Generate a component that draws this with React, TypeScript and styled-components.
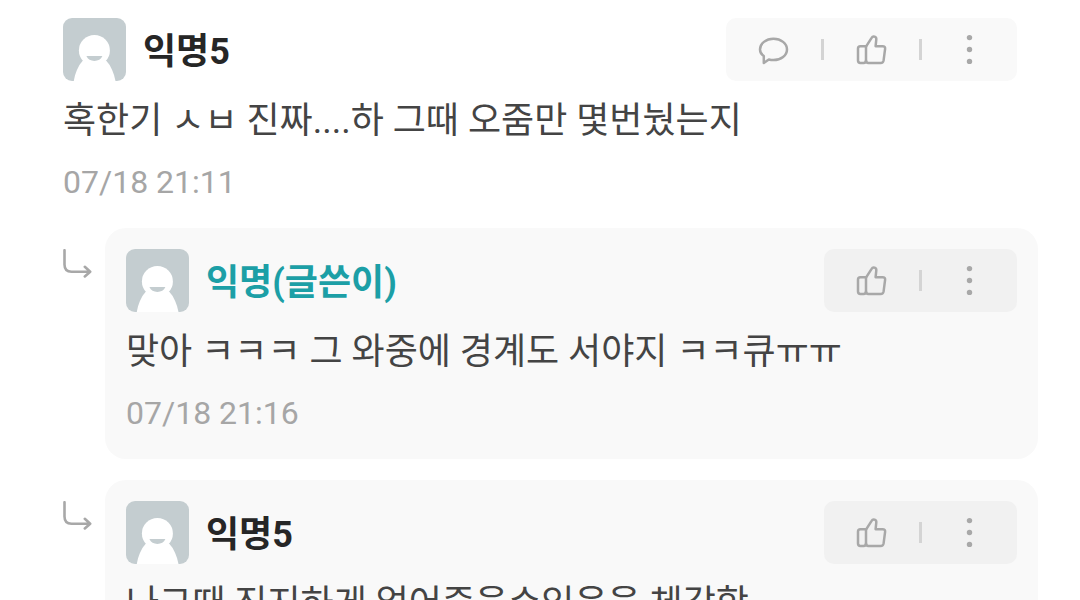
import React from "react";
import styled, { createGlobalStyle } from "styled-components";

const GlobalStyle = createGlobalStyle`
  *, *::before, *::after { box-sizing: border-box; }
  body {
    margin: 0;
    background: #ffffff;
    font-family: Roboto, "Noto Sans CJK KR", sans-serif;
  }
`;

const Thread = styled.main`
  padding: 18px 42px 21px 63px;
`;

const ReplyList = styled.ul`
  display: flex;
  flex-direction: column;
  gap: 21px;
  margin: 0;
  padding: 0;
  list-style: none;
`;

const ReplyRow = styled.li`
  display: grid;
  grid-template-columns: 42px minmax(0, 1fr);
`;

const ReplyMark = styled.svg`
  width: 30px;
  height: 30px;
  margin-top: 21px;
  fill: none;
  stroke: #a8a8a8;
  stroke-width: 2.6;
  stroke-linecap: round;
  stroke-linejoin: round;
`;

const Comment = styled.article<{ $card?: boolean }>`
  padding: ${({ $card }) => ($card ? "21px 21px 25px" : "0 21px 25px 0")};
  border-radius: ${({ $card }) => ($card ? "21px" : "0")};
  background: ${({ $card }) => ($card ? "#f9f9f9" : "transparent")};
`;

const Header = styled.header`
  display: flex;
  align-items: center;
  height: 63px;
`;

const AvatarImage = styled.svg`
  flex: none;
  width: 63px;
  height: 63px;
  border-radius: 9px;
  background: #c4cdd0;
`;

const Name = styled.h2<{ $author?: boolean }>`
  flex: 1;
  margin: 0 0 0 17px;
  padding-top: 5px;
  font-size: 36px;
  line-height: 52px;
  font-weight: 700;
  color: ${({ $author }) => ($author ? "#1c9fa6" : "#262626")};
`;

const Actions = styled.div<{ $card?: boolean }>`
  display: flex;
  align-items: center;
  height: 63px;
  border-radius: 10px;
  background: ${({ $card }) => ($card ? "#f1f1f1" : "#f9f9f9")};
`;

const ActionButton = styled.button`
  display: flex;
  align-items: center;
  justify-content: center;
  width: 95px;
  height: 63px;
  padding: 0;
  border: 0;
  background: none;
  color: #a8a8a8;
  cursor: pointer;
`;

const Divider = styled.span`
  width: 3px;
  height: 21px;
  background: #d4d4d4;
`;

const Icon = styled.svg`
  width: 33px;
  height: 33px;
  fill: none;
  stroke: currentColor;
  stroke-width: 2.5;
  stroke-linecap: round;
  stroke-linejoin: round;
`;

const Body = styled.p`
  margin: 14px 0 0;
  font-size: 36px;
  line-height: 52px;
  color: #444444;
`;

const Timestamp = styled.time`
  display: block;
  margin-top: 14px;
  font-size: 32px;
  line-height: 42px;
  color: #a6a6a6;
`;

function Avatar() {
  return (
    <AvatarImage viewBox="0 0 63 63" aria-hidden="true">
      <path d="M19.5 43 C15 48 12 55 10.8 63 H52.5 C51 55 48 48 43.5 43 Z" fill="#ffffff" />
      <circle cx="31.4" cy="32.5" r="15.5" fill="#ffffff" />
      <path d="M23.4 38 H39.4 C38 41.4 35 42.9 31.4 42.9 S24.8 41.4 23.4 38 Z" fill="#c4cdd0" />
    </AvatarImage>
  );
}

function BubbleIcon() {
  return (
    <Icon viewBox="0 0 33 33" aria-hidden="true">
      <path d="M6.8 23 V30 L11.8 26.5 C13.3 26.9 14.9 27.1 16.5 27.1 C24 27.1 30 22.3 30 16.4 S24 5.8 16.5 5.8 S3 10.5 3 16.4 C3 19 4.4 21.4 6.8 23 Z" />
    </Icon>
  );
}

function ThumbIcon() {
  return (
    <Icon viewBox="0 0 33 33" aria-hidden="true">
      <path d="M11 13.2 H5.4 Q3 13.2 3 15.6 V27.6 Q3 30 5.4 30 H8.6 Q11 30 11 27.6 Z" />
      <path d="M11 13.6 L16.6 4.8 C17.9 2.6 21.6 3.4 21.3 6.4 L20.6 13.2 H27.6 Q30.4 13.2 30.1 15.8 L28.6 27.4 Q28.2 30 25.6 30 H13.4 Q11 30 11 27.6" />
    </Icon>
  );
}

function MoreIcon() {
  return (
    <Icon viewBox="0 0 33 33" aria-hidden="true">
      {[4.6, 16.5, 28.4].map((y) => (
        <circle key={y} cx="16.5" cy={y} r="2.7" fill="currentColor" stroke="none" />
      ))}
    </Icon>
  );
}

type CommentData = {
  name: string;
  author?: boolean;
  text: string;
  time?: string;
};

function CommentItem({ data, card }: { data: CommentData; card?: boolean }) {
  return (
    <Comment $card={card}>
      <Header>
        <Avatar />
        <Name $author={data.author}>{data.name}</Name>
        <Actions $card={card}>
          {!card && (
            <>
              <ActionButton type="button" aria-label="대댓글">
                <BubbleIcon />
              </ActionButton>
              <Divider />
            </>
          )}
          <ActionButton type="button" aria-label="공감">
            <ThumbIcon />
          </ActionButton>
          <Divider />
          <ActionButton type="button" aria-label="더보기">
            <MoreIcon />
          </ActionButton>
        </Actions>
      </Header>
      <Body>{data.text}</Body>
      {data.time && <Timestamp>{data.time}</Timestamp>}
    </Comment>
  );
}

const comment: CommentData = {
  name: "익명5",
  text: "혹한기 ㅅㅂ 진짜....하 그때 오줌만 몇번눴는지",
  time: "07/18 21:11",
};

const replies: CommentData[] = [
  {
    name: "익명(글쓴이)",
    author: true,
    text: "맞아 ㅋㅋㅋ 그 와중에 경계도 서야지 ㅋㅋ큐ㅠㅠ",
    time: "07/18 21:16",
  },
  { name: "익명5", text: "나그때 진지하게 얼어죽을수있음을 체감함" },
];

export default function App() {
  return (
    <>
      <GlobalStyle />
      <Thread lang="ko">
        <CommentItem data={comment} />
        <ReplyList>
          {replies.map((reply) => (
            <ReplyRow key={reply.text}>
              <ReplyMark viewBox="0 0 30 30" aria-hidden="true">
                <path d="M1.5 1.2 V15.5 Q1.5 22.7 8.5 22.7 H27 M21.8 17.8 L27.2 22.7 L21.8 27.4" />
              </ReplyMark>
              <CommentItem data={reply} card />
            </ReplyRow>
          ))}
        </ReplyList>
      </Thread>
    </>
  );
}
